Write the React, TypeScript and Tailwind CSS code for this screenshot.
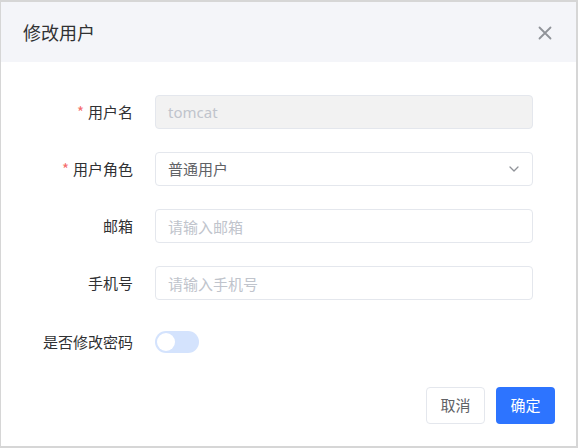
import { useState } from "react";

const font = { fontFamily: '"Noto Sans CJK SC", "Noto Sans", sans-serif' };

function Field({ label, required, children }: { label: string; required?: boolean; children: React.ReactNode }) {
  return (
    <div className="flex items-center h-[34px]">
      <div className="w-[132px] shrink-0 text-right text-[15px] text-[#303133]">
        {required && <span className="text-[#f56c6c] mr-1">*</span>}
        {label}
      </div>
      <div className="ml-[22px] w-[378px]">{children}</div>
    </div>
  );
}

export default function App() {
  const [on, setOn] = useState(false);
  return (
    <div style={font} className="w-[578px] h-[448px] bg-white border-t-2 border-l border-r-2 border-b-2 border-[#d6d6d6] flex flex-col">
      <div className="h-[60px] bg-[#f4f5f9] flex items-center justify-between pl-[22px] pr-[24px] shrink-0">
        <span className="text-[18px] text-[#303133]">修改用户</span>
        <svg width="14" height="14" viewBox="0 0 14 14" className="mt-[1px]">
          <path d="M1.5 1.5 L12.5 12.5 M12.5 1.5 L1.5 12.5" stroke="#909399" strokeWidth="1.8" strokeLinecap="round" />
        </svg>
      </div>
      <div className="flex flex-col gap-[23px] pt-[33px]">
        <Field label="用户名" required>
          <div className="h-[34px] rounded border border-[#e4e7ed] bg-[#f2f2f2] px-3 flex items-center text-[15px] text-[#c0c4cc]" style={{ fontFamily: '"Noto Sans", sans-serif' }}>
            tomcat
          </div>
        </Field>
        <Field label="用户角色" required>
          <div className="h-[34px] rounded border border-[#e4e7ed] bg-white pl-3 pr-[12px] flex items-center justify-between text-[15px] text-[#606266]">
            <span>普通用户</span>
            <svg width="12" height="12" viewBox="0 0 12 12">
              <path d="M2 4 L6 8 L10 4" fill="none" stroke="#909399" strokeWidth="1.3" strokeLinecap="round" strokeLinejoin="round" />
            </svg>
          </div>
        </Field>
        <Field label="邮箱">
          <input placeholder="请输入邮箱" className="w-full h-[34px] rounded border border-[#e4e7ed] bg-white px-3 text-[15px] text-[#606266] placeholder:text-[#c0c4cc] outline-none" />
        </Field>
        <Field label="手机号">
          <input placeholder="请输入手机号" className="w-full h-[34px] rounded border border-[#e4e7ed] bg-white px-3 text-[15px] text-[#606266] placeholder:text-[#c0c4cc] outline-none" />
        </Field>
        <div className="mt-[2px]">
          <Field label="是否修改密码">
            <button
              type="button"
              onClick={() => setOn(!on)}
              className={`relative block w-[44px] h-[22px] rounded-full ${on ? "bg-[#2d74ff]" : "bg-[#d4e3fd]"}`}
            >
              <span className={`absolute top-[2px] w-[18px] h-[18px] rounded-full bg-white ${on ? "left-[24px]" : "left-[2px]"}`} />
            </button>
          </Field>
        </div>
      </div>
      <div className="flex justify-end gap-[11px] pr-[21px] mt-[28px]">
        <button type="button" className="w-[59px] h-[37px] rounded border border-[#e4e7ed] bg-white text-[15px] text-[#606266]">取消</button>
        <button type="button" className="w-[59px] h-[37px] rounded bg-[#2d74ff] text-[15px] text-white">确定</button>
      </div>
    </div>
  );
}
